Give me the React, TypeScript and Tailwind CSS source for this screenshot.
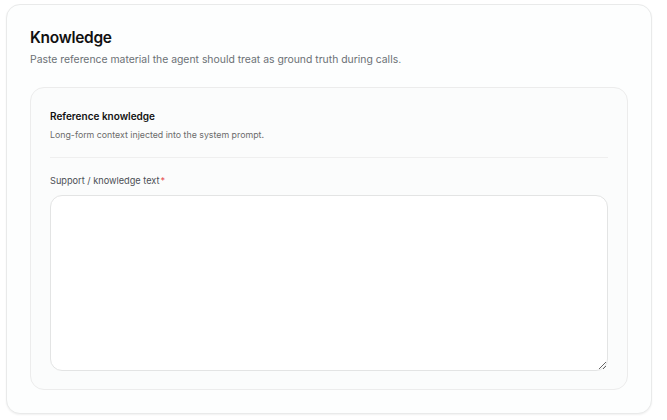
import React from "react";

export default function App() {
  return (
    <div
      className="w-[667px] h-[420px] bg-white pt-[4px] pl-[6px]"
      style={{ fontFamily: "Inter, 'Noto Sans', sans-serif" }}
    >
      <div className="w-[646px] h-[410px] rounded-[14px] border border-[#e9eaea] bg-[#fdfefe] shadow-[0_1px_2px_rgba(0,0,0,0.06)] px-[23px] pt-[23px]">
        <h2 className="text-[15.5px] leading-[20px] font-semibold text-[#111] tracking-[-0.3px]">
          Knowledge
        </h2>
        <p className="mt-[5px] text-[10.4px] leading-[14px] text-[#6b7075]">
          Paste reference material the agent should treat as ground truth during calls.
        </p>
        <div className="mt-[20px] h-[303px] rounded-[14px] border border-[#ececec] bg-[#fbfcfc] px-[19px] pt-[21px]">
          <h3 className="text-[10px] leading-[14px] font-semibold text-[#111]">
            Reference knowledge
          </h3>
          <p className="mt-[6px] text-[8.8px] leading-[12px] text-[#6b6b6b]">
            Long-form context injected into the system prompt.
          </p>
          <div className="mt-[16px] h-px bg-[#efefef]" />
          <label className="mt-[16px] block text-[9.2px] leading-[13px] text-[#4b4f55]">
            Support / knowledge text<span className="text-[#e5484d] ml-[1px]">*</span>
          </label>
          <textarea className="mt-[8px] block w-full h-[176px] rounded-[12px] border border-[#e3e4e4] bg-white outline-none" />
        </div>
      </div>
    </div>
  );
}
